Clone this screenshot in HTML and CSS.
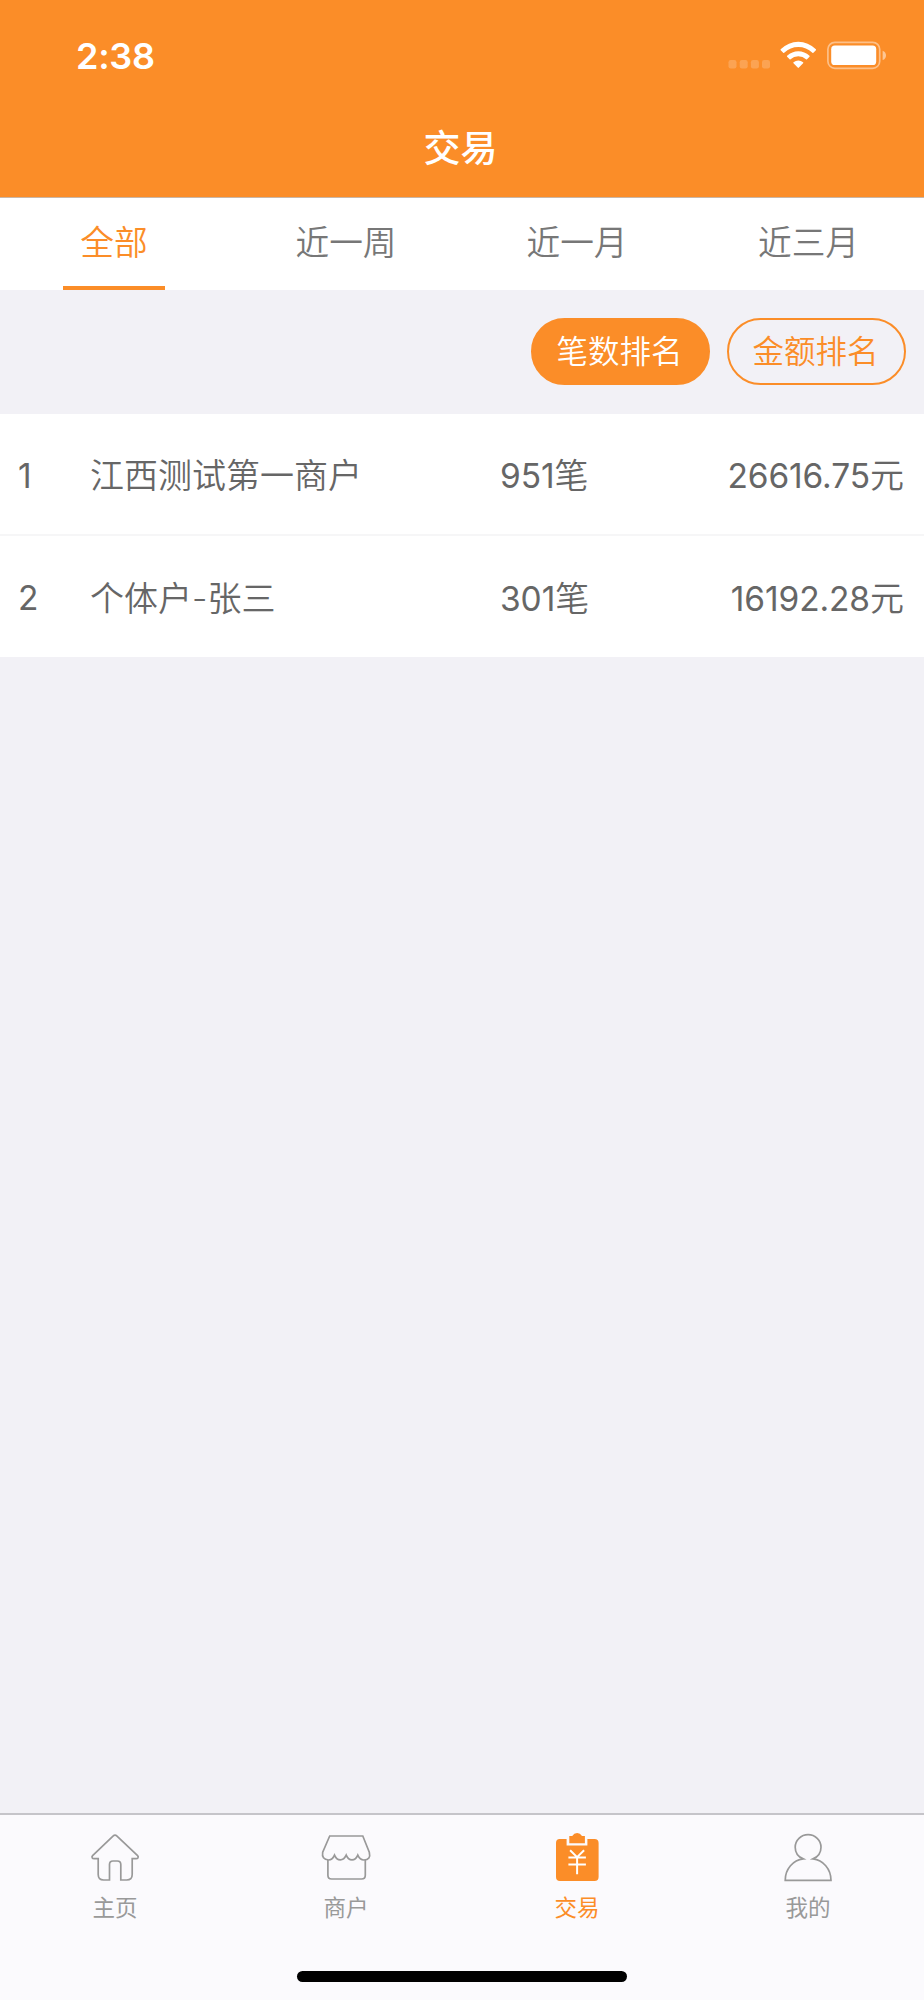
FILE: index.html
```html
<!DOCTYPE html>
<html lang="zh-CN">
<head>
<meta charset="utf-8">
<title>交易</title>
<link rel="stylesheet" href="styles.css">
</head>
<body>
<div class="screen">
  <header class="header">
    <div class="status">
      <span class="time">2:38</span>
      <svg class="status-icons" width="160" height="32" viewBox="0 0 160 32">
        <g fill="#fff" fill-opacity=".2">
          <rect x="0.5" y="20" width="8" height="8.5" rx="2.2"/>
          <rect x="11.7" y="20" width="8" height="8.5" rx="2.2"/>
          <rect x="22.9" y="20" width="8" height="8.5" rx="2.2"/>
          <rect x="34" y="20" width="8" height="8.5" rx="2.2"/>
        </g>
        <g fill="#fff">
          <path d="M52.7 9.3 Q60.5 1.7 70.3 1.7 Q80.100 1.700 87.900 9.300 Q88.300 9.800 87.900 10.300 L85.400 12.700 Q84.900 13.100 84.400 12.700 Q78.300 7.100 70.300 7.100 Q62.300 7.100 56.200 12.700 Q55.700 13.100 55.200 12.700 L52.700 10.300 Q52.300 9.800 52.700 9.300Z"/>
          <path d="M59.100 15.800 Q64 11.200 70.300 11.200 Q76.600 11.200 81.500 15.800 Q81.900 16.300 81.500 16.800 L79 19.200 Q78.500 19.600 78 19.200 Q74.800 16.200 70.300 16.200 Q65.800 16.200 62.600 19.200 Q62.100 19.600 61.600 19.200 L59.100 16.800 Q58.700 16.300 59.100 15.800Z"/>
          <path d="M65.500 22.300 Q67.700 20.600 70.300 20.600 Q72.900 20.600 75.100 22.300 Q75.600 22.800 75.100 23.300 L70.900 27.600 Q70.300 28.200 69.700 27.600 L65.500 23.300 Q65 22.800 65.500 22.300Z"/>
          <rect x="103.200" y="5.600" width="45" height="19.400" rx="3.600"/>
        </g>
        <rect x="99.900" y="2.300" width="51.800" height="26" rx="7" fill="none" stroke="#fff" stroke-opacity=".45" stroke-width="1.700"/>
        <path d="M154.600 10.700 Q158 12 158 15.400 Q158 18.800 154.600 20.100Z" fill="#fff" fill-opacity=".5"/>
      </svg>
    </div>
    <h1 class="title">交易</h1>
  </header>

  <nav class="tabs">
    <a class="tab tab-active"><span class="tab-label">全部</span></a>
    <a class="tab"><span class="tab-label">近一周</span></a>
    <a class="tab"><span class="tab-label">近一月</span></a>
    <a class="tab"><span class="tab-label">近三月</span></a>
  </nav>

  <div class="filters">
    <button class="pill pill-active">笔数排名</button>
    <button class="pill">金额排名</button>
  </div>

  <main class="list">
    <div class="row">
      <span class="rank number">1</span>
      <span class="name">江西测试第一商户</span>
      <span class="count"><span class="number">951</span>笔</span>
      <span class="amount"><span class="number">26616.75</span>元</span>
    </div>
    <div class="row">
      <span class="rank number">2</span>
      <span class="name">个体户-张三</span>
      <span class="count"><span class="number">301</span>笔</span>
      <span class="amount"><span class="number">16192.28</span>元</span>
    </div>
  </main>

  <footer class="footer">
    <nav class="menu">
      <a class="item">
        <svg class="icon" width="54" height="54" viewBox="0 0 54 54" fill="none" stroke="#999" stroke-width="1.700">
          <path d="M25 5.100 Q27 3.300 29 5.100 L49.600 24.600 Q50.600 25.700 50 26.800 Q49.500 27.700 48 27.700 H44.200 V43.500 Q44.200 49 38.700 49 H32.800 V33.500 Q32.800 30 29.300 30 H25 Q21.500 30 21.500 33.500 V49 H15.600 Q10.200 49 10.200 43.500 V27.700 H6.200 Q4.700 27.700 4.200 26.800 Q3.600 25.700 4.600 24.600Z"/>
        </svg>
        <span>主页</span>
      </a>
      <a class="item">
        <svg class="icon" width="54" height="54" viewBox="0 0 54 54" fill="none" stroke="#999" stroke-width="1.700">
          <path d="M10.700 5 H43.800 L50.300 21.200 Q52.200 29 44.800 29 Q41 29 38.800 24.200 Q36.800 28.900 33 28.900 Q29.200 28.900 27.200 24.200 Q25 28.900 21.300 28.900 Q17.500 28.900 15.500 24.200 Q13.500 29 9.700 29 Q2.300 28.500 3.700 21.200Z"/>
          <path d="M8.900 29 V44.300 Q8.900 48 12.600 48 H42.600 Q46.300 48 46.300 44.300 V29"/>
        </svg>
        <span>商户</span>
      </a>
      <a class="item item-active">
        <svg class="icon" width="54" height="54" viewBox="0 0 54 54">
          <path d="M9.700 8 H16.600 V14.500 H37.400 V8 H44.500 Q48.600 8 48.600 12.100 V46 Q48.600 50.100 44.500 50.100 H10 Q6 50.100 6 46 V12.100 Q6 8 9.700 8Z" fill="#fb8d28"/>
          <path d="M19.300 5 H22.200 Q24 2 27.100 2 Q30.200 2 32 5 H34.900 V12.300 H19.300Z" fill="#fb8d28"/>
          <path d="M20.100 19.200 L27.100 26.200 L34.100 19.200 M27.100 26 V43.200 M18.400 26.500 H35.900 M18.400 33.500 H35.900" fill="none" stroke="#fff" stroke-width="2"/>
        </svg>
        <span>交易</span>
      </a>
      <a class="item">
        <svg class="icon" width="54" height="54" viewBox="0 0 54 54" fill="none" stroke="#999" stroke-width="1.700">
          <path d="M22.200 27.900 Q14.200 24.500 14.200 16.200 A12.900 12.600 0 0 1 40 16.200 Q40 24.500 32 27.900 C42 29 50 38 50 49.400 H4.200 C4.200 38 12.200 29 22.200 27.900Z"/>
        </svg>
        <span>我的</span>
      </a>
    </nav>
    <div class="home-bar"></div>
  </footer>
</div>
</body>
</html>
```

FILE: styles.css
```css
* { box-sizing: border-box; }

body {
  margin: 0;
  font-family: Inter, "Noto Sans CJK SC", sans-serif;
  color: #666;
}

.screen {
  display: flex;
  flex-direction: column;
  width: 924px;
  height: 2000px;
  background: #f2f1f6;
}

.header {
  height: 198px;
  background: #fb8d28;
  border-bottom: 1px solid #c9b6a6;
  color: #fff;
}

.status {
  display: flex;
  justify-content: space-between;
  align-items: flex-start;
  height: 110px;
  padding: 40px 36px 0 76px;
}

.time {
  font-size: 36px;
  font-weight: 600;
  line-height: 32px;
  letter-spacing: -0.3px;
}

.title {
  margin: 0;
  padding-right: 3px;
  font-size: 37px;
  font-weight: 500;
  line-height: 78px;
  text-align: center;
}

.tabs {
  display: grid;
  grid-template-columns: 231px 230px 232px 231px;
  height: 92px;
  background: #fff;
  color: #777;
  font-size: 33.700px;
  font-weight: 350;
}

.tab {
  display: flex;
  justify-content: center;
}

.tab-label {
  height: 92px;
  line-height: 89px;
}

.tab-active { color: #fb8d28; }

.tab-active .tab-label {
  width: 102px;
  margin-right: 3px;
  border-bottom: 4px solid #fb8d28;
  text-align: center;
}

.filters {
  display: flex;
  justify-content: flex-end;
  gap: 17px;
  height: 124px;
  padding: 28px 18px 0 0;
}

.pill {
  width: 179px;
  height: 67px;
  padding: 1px 2px 0 0;
  border: 2px solid #fb8d28;
  border-radius: 34px;
  background: transparent;
  color: #fb8d28;
  font-family: inherit;
  font-size: 31.5px;
  font-weight: 350;
  line-height: 62px;
}

.pill-active {
  background: #fb8d28;
  color: #fff;
}

.row {
  display: grid;
  grid-template-columns: 72px 410px 1fr auto;
  height: 121px;
  padding: 0 20px 0 18px;
  background: #fff;
  font-size: 34px;
  font-weight: 350;
  line-height: 125px;
}

.number {
  font-size: 33.5px;
  font-weight: 370;
  letter-spacing: -0.1px;
}

.row:first-child {
  height: 122px;
  border-bottom: 2px solid #f6f6f7;
  line-height: 124px;
}

.footer {
  height: 187px;
  margin-top: auto;
  border-top: 2px solid #c5c4c9;
  background: #fbfafd;
}

.menu {
  display: grid;
  grid-template-columns: repeat(4, 1fr);
  height: 156px;
  padding-top: 16px;
}

.item {
  display: flex;
  flex-direction: column;
  align-items: center;
  padding-right: 1px;
  color: #999;
  font-size: 22.5px;
  line-height: 45px;
}

.item-active { color: #fb8d28; }

.home-bar {
  width: 330px;
  height: 11px;
  margin: 0 auto;
  border-radius: 6px;
  background: #000;
}
```
